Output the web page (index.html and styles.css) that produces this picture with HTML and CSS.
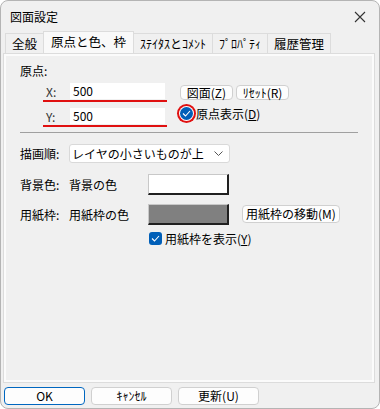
FILE: index.html
```html
<!DOCTYPE html>
<html lang="ja">
<head>
    <meta charset="UTF-8">
    <title>図面設定</title>
    <link rel="stylesheet" href="styles.css">
</head>
<body>
<div class="window">
    <div class="titlebar">
        <span class="title">図面設定</span>
        <svg class="close" width="12" height="12" viewBox="0 0 12 12">
            <path d="M1 1 L11 11 M11 1 L1 11" stroke="#333" stroke-width="1.1" fill="none"/>
        </svg>
    </div>

    <div class="tabs">
        <div class="tab">全般</div>
        <div class="tab active">原点と色、枠</div>
        <div class="tab narrow">ｽﾃｲﾀｽとｺﾒﾝﾄ</div>
        <div class="tab narrow">ﾌﾟﾛﾊﾟﾃｨ</div>
        <div class="tab">履歴管理</div>
    </div>

    <div class="panel">
        <div class="label">原点:</div>
        <div class="origin">
            <div class="coords">
                <div class="coord">
                    <span class="axis">X:</span>
                    <span class="field">500</span>
                </div>
                <div class="coord">
                    <span class="axis">Y:</span>
                    <span class="field">500</span>
                </div>
            </div>
            <div class="origin-side">
                <div class="btnrow">
                    <span class="btn small">図面(Z)</span>
                    <span class="btn small">ﾘｾｯﾄ(R)</span>
                </div>
                <div class="check marked">
                    <span class="box"><svg width="9" height="7" viewBox="0 0 9 7"><path d="M1 3.5 L3.5 6 L8 1" stroke="#fff" stroke-width="1.1" fill="none"/></svg></span>
                    <span>原点表示(<u>D</u>)</span>
                </div>
            </div>
        </div>

        <hr class="sep">

        <div class="row order">
            <span class="rowlabel">描画順:</span>
            <div class="select">
                <span>レイヤの小さいものが上</span>
                <svg width="9" height="5" viewBox="0 0 9 5"><path d="M0.5 0.5 L4.5 4.5 L8.5 0.5" stroke="#555" fill="none"/></svg>
            </div>
        </div>

        <div class="row color">
            <span class="rowlabel">背景色:</span>
            <span class="colname">背景の色</span>
            <span class="swatch white"></span>
        </div>

        <div class="row color">
            <span class="rowlabel">用紙枠:</span>
            <span class="colname">用紙枠の色</span>
            <span class="swatch gray"></span>
            <span class="btn move">用紙枠の移動(M)</span>
        </div>

        <div class="check paper">
            <span class="box"><svg width="9" height="7" viewBox="0 0 9 7"><path d="M1 3.5 L3.5 6 L8 1" stroke="#fff" stroke-width="1.1" fill="none"/></svg></span>
            <span>用紙枠を表示(<u>Y</u>)</span>
        </div>
    </div>

    <div class="footer">
        <span class="btn foot default">OK</span>
        <span class="btn foot">ｷｬﾝｾﾙ</span>
        <span class="btn foot">更新(U)</span>
    </div>
</div>
</body>
</html>
```

FILE: styles.css
```css
body {
    margin: 0;
    background: #ffffff;
    font-family: "Noto Sans CJK JP", "Noto Sans", sans-serif;
    font-size: 12px;
    color: #000;
}
.window {
    box-sizing: border-box;
    width: 380px;
    height: 409px;
    background: #f0f0f0;
    border: 1px solid #b4b4b4;
    border-radius: 8px;
    display: flex;
    flex-direction: column;
    overflow: hidden;
}
.titlebar {
    height: 31px;
    display: flex;
    align-items: center;
    justify-content: space-between;
    padding: 0 13px 0 9px;
}
.title {
    font-size: 12px;
}
.tabs {
    display: flex;
    padding-left: 4px;
    height: 21px;
    align-items: flex-end;
}
.tab {
    height: 19px;
    line-height: 19px;
    padding: 0 6px;
    border: 1px solid #dcdcdc;
    border-bottom: none;
    margin-right: -1px;
    font-size: 12.5px;
}
.tab.narrow {
    font-size: 12px;
}
.tab.active {
    height: 21px;
    line-height: 20px;
    background: #f9f9f9;
    padding: 0 7px;
    position: relative;
    z-index: 1;
}
.panel {
    margin: 0 4px 0 2px;
    height: 330px;
    box-sizing: border-box;
    border: 1px solid #dcdcdc;
    box-shadow: inset -2px -2px 0 #fbfbfb, inset 2px 2px 0 #fbfbfb;
    padding: 8px 16px 0 16px;
}
.label {
    height: 16px;
}
.origin {
    display: flex;
    margin-top: 4px;
}
.coords {
    width: 123px;
    padding-left: 24px;
    display: flex;
    flex-direction: column;
    gap: 5px;
}
.coord {
    display: flex;
    align-items: center;
    height: 18px;
    border-bottom: 2px solid #e01010;
    margin-left: -1px;
}
.axis {
    width: 24px;
    padding-left: 3px;
    color: #333;
}
.field {
    flex: 1;
    height: 16px;
    background: #fff;
    line-height: 16px;
    padding-left: 3px;
    margin-bottom: 1px;
    margin-right: 2px;
}
.origin-side {
    margin-left: 13px;
    padding-top: 3px;
}
.btnrow {
    display: flex;
    gap: 3px;
}
.btn {
    display: inline-block;
    box-sizing: border-box;
    background: #fdfdfd;
    border: 1px solid #d0d0d0;
    border-radius: 4px;
    text-align: center;
}
.btn.small {
    width: 53px;
    height: 15px;
    line-height: 13px;
}
.check {
    display: flex;
    align-items: center;
    gap: 3px;
}
.box {
    width: 13px;
    height: 13px;
    border-radius: 3px;
    background: #005fb8;
    display: flex;
    align-items: center;
    justify-content: center;
}
.check.marked {
    margin-top: 5px;
}
.check.marked .box {
    box-shadow: 0 0 0 1px #fff, 0 0 0 3px #e01010;
    border-radius: 50%;
}
.sep {
    border: none;
    border-top: 1px solid #a0a0a0;
    margin: 5px 0 0 0;
    width: 338px;
}
.row {
    display: flex;
    align-items: center;
}
.rowlabel {
    width: 49px;
}
.order {
    margin-top: 11px;
}
.select {
    box-sizing: border-box;
    width: 161px;
    height: 19px;
    background: #fff;
    border: 1px solid #d9d9d9;
    border-radius: 3px;
    display: flex;
    align-items: center;
    justify-content: space-between;
    padding: 0 6px 0 2px;
}
.color {
    margin-top: 11px;
    height: 20px;
}
.color + .color {
    margin-top: 10px;
}
.colname {
    width: 79px;
}
.swatch {
    box-sizing: border-box;
    width: 81px;
    height: 21px;
    border-top: 1px solid #c8c8c8;
    border-left: 1px solid #c8c8c8;
    border-right: 2px solid #202020;
    border-bottom: 2px solid #202020;
}
.swatch.white {
    background: #fff;
}
.swatch.gray {
    background: #808080;
}
.btn.move {
    margin-left: 13px;
    height: 18px;
    line-height: 16px;
    padding: 0 3px;
}
.check.paper {
    margin: 6px 0 0 129px;
}
.footer {
    display: flex;
    gap: 6px;
    padding: 4px 0 0 3px;
}
.btn.foot {
    width: 81px;
    height: 18px;
    line-height: 16px;
}
.btn.default {
    border: 1px solid #0067c0;
    border-radius: 4px;
}
```
